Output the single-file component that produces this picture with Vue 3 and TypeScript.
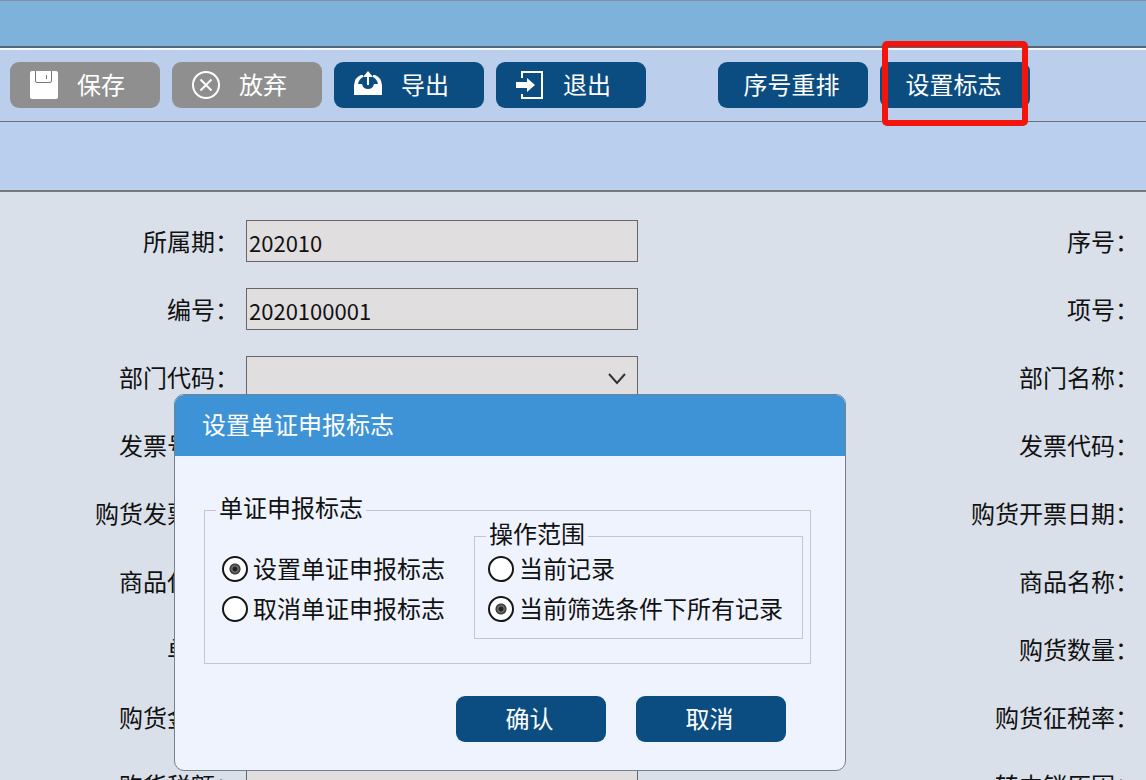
<script setup lang="ts">
import { ref } from 'vue'

interface Row {
  id: string
  label: string
  kind: 'text' | 'select'
  value: string
  right: string
}

const rows = ref<Row[]>([
  { id: 'period', label: '所属期', kind: 'text', value: '202010', right: '序号' },
  { id: 'code', label: '编号', kind: 'text', value: '2020100001', right: '项号' },
  { id: 'dept', label: '部门代码', kind: 'select', value: '', right: '部门名称' },
  { id: 'invoice', label: '发票号码', kind: 'text', value: '', right: '发票代码' },
  { id: 'purchase', label: '购货发票号', kind: 'text', value: '', right: '购货开票日期' },
  { id: 'goods', label: '商品代码', kind: 'text', value: '', right: '商品名称' },
  { id: 'unit', label: '单位', kind: 'text', value: '', right: '购货数量' },
  { id: 'amount', label: '购货金额', kind: 'text', value: '', right: '购货征税率' },
  { id: 'tax', label: '购货税额', kind: 'text', value: '', right: '转内销原因' },
])

const flagMode = ref('set')
const scope = ref('all')
</script>

<template>
  <div class="app">
    <div class="titlebar"></div>
    <div class="toolbar">
      <button type="button" class="btn muted">
        <svg class="icon" viewBox="0 0 28 28">
          <rect width="28" height="28" rx="2" fill="#fff" />
          <path fill="none" stroke="#777" d="M5.500 0v10q0 1.500 1.500 1.500h13q1.500 0 1.500-1.500V0" />
          <path fill="#777" d="M16 4h1v4h-1z" />
        </svg>
        <span>保存</span>
      </button>
      <button type="button" class="btn muted">
        <svg class="icon" viewBox="0 0 28 28" fill="none" stroke="#fff" stroke-width="2">
          <circle cx="14" cy="14" r="13" />
          <path d="M8.500 8.500l11 11M19.500 8.500l-11 11" />
        </svg>
        <span>放弃</span>
      </button>
      <button type="button" class="btn">
        <svg class="icon" viewBox="0 0 28 28">
          <path fill="#fff" d="M0 24V14Q1 6 7 4h2v2Q5 8 4 13h4q1 5 6 5t6-5h4Q23 8 19 6V4h2q6 2 7 10v10z" />
          <path fill="#fff" d="M14 0l5 6h-4v8h-2V6H9z" />
        </svg>
        <span>导出</span>
      </button>
      <button type="button" class="btn">
        <svg class="icon" viewBox="0 0 28 28">
          <path fill="none" stroke="#fff" stroke-width="2" d="M6 7V1h20v26H6v-4" />
          <path fill="#fff" d="M0 11h11V7l8 7-8 7v-4H0z" />
        </svg>
        <span>退出</span>
      </button>
      <button type="button" class="btn plain spaced">序号重排</button>
      <div class="marked">
        <button type="button" class="btn plain">设置标志</button>
        <div class="marker"></div>
      </div>
    </div>
    <div class="subbar"></div>

    <main class="form">
      <div v-for="row in rows" :key="row.id" class="row">
        <label class="label" :for="row.id">{{ row.label }}：</label>
        <input v-if="row.kind === 'text'" :id="row.id" v-model="row.value" class="field" type="text" />
        <div v-else class="select-wrap">
          <select :id="row.id" v-model="row.value" class="field">
            <option value=""></option>
          </select>
          <svg class="chevron" viewBox="0 0 18 12" fill="none" stroke="#333" stroke-width="2">
            <path d="M1 1l8 9 8-9" />
          </svg>
        </div>
        <span class="label">{{ row.right }}：</span>
      </div>
    </main>

    <section class="dialog" role="dialog" aria-labelledby="dialog-title">
      <h2 id="dialog-title" class="dialog-title">设置单证申报标志</h2>
      <div class="dialog-body">
        <fieldset class="group outer">
          <legend>单证申报标志</legend>
          <div class="options">
            <label class="option"><input v-model="flagMode" type="radio" name="flag" value="set" /><span>设置单证申报标志</span></label>
            <label class="option"><input v-model="flagMode" type="radio" name="flag" value="clear" /><span>取消单证申报标志</span></label>
          </div>
          <fieldset class="group inner">
            <legend>操作范围</legend>
            <label class="option"><input v-model="scope" type="radio" name="scope" value="current" /><span>当前记录</span></label>
            <label class="option"><input v-model="scope" type="radio" name="scope" value="all" /><span>当前筛选条件下所有记录</span></label>
          </fieldset>
        </fieldset>
        <div class="actions">
          <button type="button" class="btn plain">确认</button>
          <button type="button" class="btn plain">取消</button>
        </div>
      </div>
    </section>
  </div>
</template>

<style>
body {
  margin: 0;
}
</style>

<style scoped>
.app {
  position: relative;
  height: 100vh;
  overflow: hidden;
  box-sizing: border-box;
  border-top: 1px solid #7f8fa0;
  background: #d9e0ea;
  color: #111;
  font-family: "Noto Sans CJK SC", sans-serif;
  font-size: 24px;
  line-height: 36px;
}

.titlebar {
  height: 45px;
  background: #7fb2da;
  border-bottom: 2px solid #566674;
}

.toolbar {
  display: flex;
  align-items: flex-start;
  gap: 12px;
  height: 74px;
  box-sizing: border-box;
  padding: 12px 10px 0;
  border-top: 2px solid #f4f8ff;
  border-bottom: 1px solid #6b7078;
  background: #bbcfec;
}

.subbar {
  height: 68px;
  border-bottom: 2px solid #74797f;
  background: #bacfed;
}

.btn {
  display: flex;
  align-items: center;
  gap: 19px;
  width: 150px;
  height: 46px;
  padding: 0 20px;
  border: 0;
  border-radius: 9px;
  background: #0b4d80;
  color: #fff;
  font: inherit;
  white-space: nowrap;
}

.btn span {
  padding-bottom: 3px;
}

.btn.muted {
  background: #8f8f8f;
}

.btn.plain {
  justify-content: center;
  padding: 0 3px 3px 0;
}

.spaced {
  margin-left: 60px;
}

.icon {
  width: 28px;
  height: 28px;
}

.marked {
  position: relative;
}

.marker {
  position: absolute;
  top: -21px;
  right: 2px;
  bottom: -18px;
  left: 2px;
  border: 6px solid #f3140c;
  border-radius: 5px;
}

.form {
  display: grid;
  gap: 26px;
  padding-top: 28px;
}

.row {
  display: grid;
  grid-template-columns: 240px 392px 1fr;
  column-gap: 6px;
  align-items: center;
  height: 42px;
  padding-right: 6px;
}

.label {
  padding: 0 1px 1px 0;
  text-align: right;
  white-space: nowrap;
}

.field {
  display: block;
  width: 100%;
  height: 42px;
  box-sizing: border-box;
  padding: 2px 2px 0;
  border: 1px solid #66666a;
  border-radius: 0;
  background: #e1dee0;
  color: #111;
  font: inherit;
  font-size: 22px;
  appearance: none;
}

.select-wrap {
  position: relative;
}

.chevron {
  position: absolute;
  top: 17px;
  right: 12px;
  width: 18px;
  height: 12px;
  pointer-events: none;
}

.dialog {
  position: absolute;
  top: 393px;
  left: 174px;
  width: 672px;
  box-sizing: border-box;
  overflow: hidden;
  border: 1px solid #74808c;
  border-radius: 10px;
  background: #eef3fd;
}

.dialog-title {
  margin: 0;
  padding: 11px 27px 14px;
  background: #3e93d6;
  color: #fff;
  font-size: 24px;
  font-weight: 400;
}

.dialog-body {
  padding: 33px 34px 28px 29px;
}

.group {
  min-width: 0;
  box-sizing: border-box;
  margin: 0;
  border: 1px solid #c3c5d0;
}

.group legend {
  padding: 0 3px 6px;
}

.outer {
  display: grid;
  grid-template-columns: 252px 1fr;
  height: 175px;
  padding: 0 7px 0 17px;
}

.outer > legend {
  margin-left: -6px;
}

.options {
  padding-top: 18px;
}

.inner {
  height: 124px;
  margin-top: -16px;
  padding: 0 0 0 13px;
}

.inner > legend {
  margin-left: -2px;
}

.inner > .option:first-of-type {
  margin-top: -8px;
}

.option {
  display: flex;
  align-items: center;
  gap: 5px;
  height: 40px;
  white-space: nowrap;
}

.option span {
  padding-bottom: 3px;
}

.option input {
  width: 26px;
  height: 26px;
  flex: none;
  box-sizing: border-box;
  margin: 0;
  border: 2px solid #161616;
  border-radius: 50%;
  background: #fff;
  appearance: none;
}

.option input:checked {
  background: radial-gradient(circle, #222 0 2px, #777 3px, #333 5px, #fff 6px);
}

.actions {
  display: flex;
  justify-content: flex-end;
  gap: 30px;
  padding: 32px 25px 0 0;
}
</style>
